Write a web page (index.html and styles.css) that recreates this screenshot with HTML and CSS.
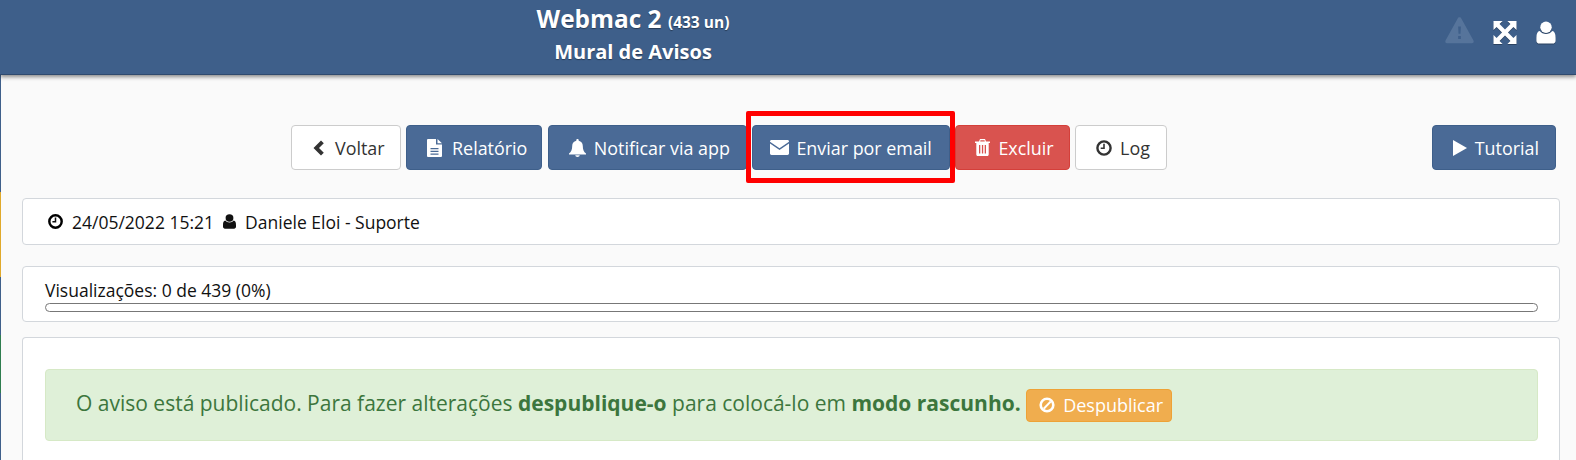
FILE: index.html
```html
<!DOCTYPE html>
<html lang="pt-BR">
<head>
    <meta charset="UTF-8">
    <title>Mural de Avisos</title>
    <link rel="stylesheet" href="styles.css">
</head>
<body>
    <div class="side-strip">
        <span class="strip-blue strip-top"></span>
        <span class="strip-yellow"></span>
        <span class="strip-blue strip-mid"></span>
        <span class="strip-green"></span>
        <span class="strip-blue strip-end"></span>
    </div>

    <header class="topbar">
        <div class="title">
            <h1>Webmac 2 <small>(433 un)</small></h1>
            <h2>Mural de Avisos</h2>
        </div>
        <div class="top-icons">
            <svg class="icon-warn" width="29" height="28" viewBox="0 0 32 30"><path fill-rule="evenodd" d="M16 1c1 0 1.6.6 2 1.3l13.4 24.4c.7 1.3-.1 2.8-1.6 2.8H2.2C.7 29.5-.1 28 .6 26.700L14 2.3C14.4 1.600 15 1 16 1zM14.500 11l.4 8h2.200l.4-8zM14.500 21.500v3.500h3v-3.500z"/></svg>
            <svg class="icon-expand" width="24" height="23" viewBox="0 0 24 24"><path d="M0 0h9.500L6.300 3.200 12 8.900l5.700-5.700L14.500 0H24v9.500l-3.200-3.200L15.100 12l5.700 5.700 3.200-3.200V24h-9.500l3.200-3.200L12 15.100l-5.700 5.700L9.500 24H0v-9.500l3.200 3.200L8.900 12 3.200 6.300 0 9.500z"/></svg>
            <svg class="icon-user" width="20" height="23" viewBox="0 0 20 24"><circle cx="10" cy="6.500" r="6"/><path d="M3.500 10.500C5 12.500 7.300 13.500 10 13.500s5-1 6.500-3c2.300.4 3.500 2.500 3.500 7v3c0 1.700-1.300 3-3 3H3c-1.700 0-3-1.300-3-3v-3c0-4.500 1.200-6.600 3.500-7z"/></svg>
        </div>
    </header>

    <main class="content">
        <div class="actions">
            <div class="actions-main">
                <a class="btn btn-default btn-back">
                    <svg width="13" height="16" viewBox="0 0 13 16"><path d="M9 0.500 11.800 3.300 7 8l4.800 4.700L9 15.500 1.500 8z"/></svg>
                    Voltar
                </a>
                <a class="btn btn-primary btn-report">
                    <svg width="15" height="18" viewBox="0 0 15 18"><path fill-rule="evenodd" d="M1 0h8v5.500h6V17a1 1 0 0 1-1 1H1a1 1 0 0 1-1-1V1a1 1 0 0 1 1-1zM10.500 0 15 4.200h-4.500zM3.500 9v1.300h8V9zM3.500 11.700V13h8v-1.300zM3.500 14.400v1.300h8v-1.300z"/></svg>
                    Relatório
                </a>
                <a class="btn btn-primary">
                    <svg width="17" height="18" viewBox="0 0 17 18"><path d="M8.500 0c.7 0 1.200.5 1.200 1.200v.6c2.500.5 4.100 2.500 4.100 5.200 0 4 1 5.700 3.200 7.500v1H0v-1c2.200-1.800 3.200-3.500 3.200-7.500 0-2.700 1.600-4.700 4.100-5.200v-.6C7.300.5 7.800 0 8.500 0zM6.300 16.300h4.400c0 1-1 1.700-2.200 1.700s-2.200-.7-2.200-1.700z"/></svg>
                    Notificar via app
                </a>
                <a class="btn btn-primary btn-marked">
                    <svg width="19" height="15" viewBox="0 0 19 15"><path d="M1.500 0h16c.8 0 1.500.6 1.500 1.400v.3L9.500 8.200 0 1.700v-.3C0 .6.700 0 1.500 0zM0 3.600l9.500 6.500L19 3.600v10c0 .8-.7 1.400-1.500 1.400h-16C.7 15 0 14.400 0 13.600z"/></svg>
                    Enviar por email
                </a>
                <a class="btn btn-danger">
                    <svg width="15" height="17" viewBox="0 0 15 17"><path fill-rule="evenodd" d="M5 0h5l1 2.500h4V4h-1.300v11.500c0 .9-.6 1.500-1.400 1.500H2.700c-.8 0-1.400-.6-1.400-1.500V4H0V2.500h4zM5.500 1.300 5.200 2.500h4.600l-.3-1.200zM4 6v8.500h1.300V6zM6.900 6v8.500h1.300V6zM9.700 6v8.500H11V6z"/></svg>
                    Excluir
                </a>
                <a class="btn btn-default">
                    <svg width="16" height="16" viewBox="0 0 16 16"><circle cx="8" cy="8" r="6.600" fill="none" stroke="#333" stroke-width="2.400"/><path d="M7.200 3.800h1.600v5.200H4.700V7.500h2.500z"/></svg>
                    Log
                </a>
            </div>
            <a class="btn btn-primary">
                <svg width="14" height="16" viewBox="0 0 14 16"><path d="M0 0 14 8 0 16z"/></svg>
                Tutorial
            </a>
        </div>

        <section class="panel panel-info">
            <svg width="15" height="15" viewBox="0 0 16 16"><circle cx="8" cy="8" r="6.600" fill="none" stroke="#000" stroke-width="2.600"/><path d="M7.200 3.800h1.600v5.200H4.700V7.500h2.500z"/></svg>
            <span>24/05/2022 15:21</span>
            <svg class="icon-author" width="13" height="15" viewBox="0 0 20 24" preserveAspectRatio="none"><circle cx="10" cy="6.500" r="6"/><path d="M3.500 10.500C5 12.500 7.300 13.500 10 13.500s5-1 6.500-3c2.300.4 3.500 2.500 3.500 7v3c0 1.700-1.300 3-3 3H3c-1.700 0-3-1.300-3-3v-3c0-4.500 1.200-6.600 3.500-7z"/></svg>
            <span>Daniele Eloi - Suporte</span>
        </section>

        <section class="panel panel-views">
            <div class="views-label">Visualizações: 0 de 439 (0%)</div>
            <div class="progress"></div>
        </section>

        <section class="panel panel-body">
            <div class="alert">
                O aviso está publicado. Para fazer alterações <strong>despublique-o</strong> para colocá-lo em <strong>modo rascunho.</strong>
                <a class="btn btn-warning">
                    <svg width="16" height="16" viewBox="0 0 16 16"><circle cx="8" cy="8" r="6.300" fill="none" stroke="#fff" stroke-width="2.600"/><path d="M4 11 11 3.800l1.400 1.400L5.400 12.400z"/></svg>
                    Despublicar
                </a>
            </div>
        </section>
    </main>
</body>
</html>
```

FILE: styles.css
```css
* {
    box-sizing: border-box;
}

html, body {
    height: 460px;
    overflow: hidden;
}

body {
    margin: 0;
    background: #fafafa;
    color: #333;
    font-family: 'Open Sans', sans-serif;
    font-size: 17.5px;
    padding-left: 1px;
}

svg {
    fill: currentColor;
    flex: none;
}

/* coloured line on the left edge */
.side-strip {
    position: absolute;
    left: 0;
    top: 0;
    width: 1px;
    height: 460px;
    display: flex;
    flex-direction: column;
}

.strip-blue { background: #3e5f8a; }
.strip-top { height: 192px; }
.strip-yellow { height: 85px; background: #e0a92b; }
.strip-mid { height: 58px; }
.strip-green { height: 58px; background: #2f7d4f; }
.strip-end { flex: 1; }

.topbar {
    position: absolute;
    left: 0;
    top: 0;
    width: 100%;
    height: 75px;
    background: #3e5f8a;
    color: #fff;
    box-shadow: 0 2px 4px rgba(0, 0, 0, 0.45);
    border-bottom: 1px solid #2f4a6e;
}

.title {
    width: 1266px;
    text-align: center;
    padding-top: 4px;
    text-shadow: 0 1px 1px rgba(0, 0, 0, 0.4);
}

.title h1 {
    margin: 0;
    font-size: 24.4px;
    line-height: 30px;
    font-weight: 700;
}

.title h1 small {
    font-size: 15.5px;
}

.title h2 {
    margin: 0;
    font-size: 20px;
    line-height: 30px;
    font-weight: 700;
}

.top-icons {
    position: absolute;
    top: 16px;
    right: 20px;
    height: 28px;
    display: flex;
    align-items: flex-end;
    gap: 19px;
}

.top-icons svg {
    filter: drop-shadow(0 1px 0 rgba(0, 0, 0, 0.3));
}

.top-icons .icon-warn {
    color: #56749b;
    filter: none;
}

.content {
    padding: 125px 16px 0 21px;
}

.actions {
    display: flex;
    justify-content: space-between;
    height: 45px;
    margin: 0 4px 28px 0;
}

.actions-main {
    display: flex;
    gap: 5.5px;
    margin-left: 269px;
}

.btn {
    display: inline-flex;
    align-items: center;
    gap: 8px;
    height: 45px;
    padding: 0 16px 0 20px;
    border: 1px solid transparent;
    border-radius: 4px;
    font-size: 17.9px;
    white-space: nowrap;
}

.btn-default {
    background: #fff;
    border-color: #ccc;
    color: #333;
}

.btn-primary {
    background: #4a6a96;
    border-color: #3e5f8a;
    color: #fff;
}

.btn-danger {
    background: #d9534f;
    border-color: #d43f3a;
    color: #fff;
    padding: 0 15px 0 19px;
}

.btn-warning {
    background: #f0ad4e;
    border-color: #eea236;
    color: #fff;
    height: 33px;
    padding: 0 8px 0 12px;
    font-size: 18px;
    vertical-align: middle;
}

.btn-back {
    gap: 10px;
    padding-right: 15px;
}

.btn-report {
    gap: 10px;
    padding-right: 14px;
}

/* red box drawn over the screenshot */
.btn-marked {
    position: relative;
    gap: 7px;
    padding: 0 17px;
}

.btn-marked::after {
    content: "";
    position: absolute;
    left: -7px;
    top: -15px;
    right: -6px;
    bottom: -14px;
    border: 5px solid #f00;
    border-radius: 2px;
}

.panel {
    background: #fff;
    border: 1px solid #d3d7dc;
    border-radius: 4px;
    margin-bottom: 21px;
    color: #111;
}

.panel-info {
    display: flex;
    align-items: center;
    height: 47px;
    padding-left: 25px;
    gap: 9px;
}

.panel-views {
    height: 56px;
    margin-bottom: 15px;
    padding: 12px 21px 0 22px;
}

.views-label {
    line-height: 22px;
    height: 24px;
}

.progress {
    height: 9px;
    border: 1px solid #777;
    border-radius: 5px;
    background: #fff;
}

/* runs on below the window */
.panel-body {
    height: 123px;
    margin-bottom: 0;
    padding: 31px 21px 0 22px;
    border-bottom: none;
    border-radius: 4px 4px 0 0;
}

.alert {
    height: 72px;
    padding: 13px 30px 0;
    background: #dff0d8;
    border: 1px solid #d6e9c6;
    border-radius: 4px;
    color: #3c763d;
    font-size: 21px;
    line-height: 40px;
}
```
